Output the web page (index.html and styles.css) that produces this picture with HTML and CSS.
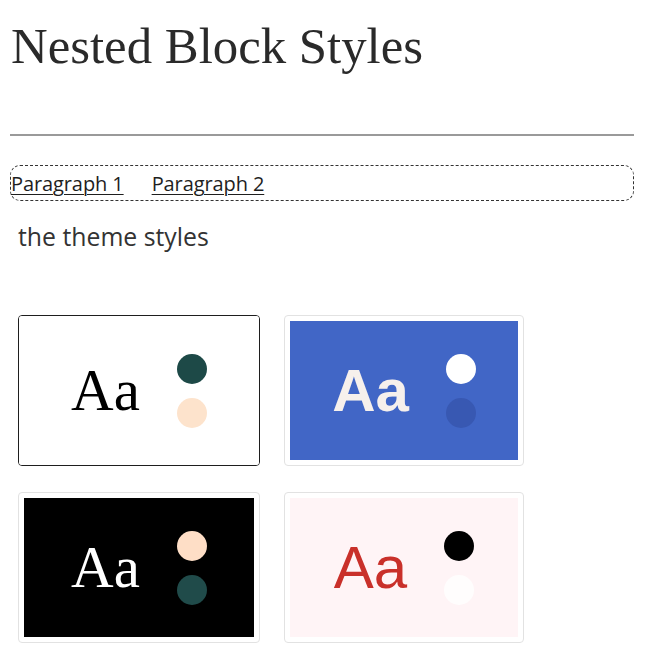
FILE: index.html
```html
<!DOCTYPE html>
<html>
<head>
<meta charset="utf-8">
<link rel="stylesheet" href="styles.css">
</head>
<body>
<div class="page">
  <h1 class="title">Nested Block Styles</h1>
  <hr class="sep">
  <div class="links">
    <a class="link" href="#">Paragraph 1</a>
    <a class="link" href="#">Paragraph 2</a>
  </div>
  <section class="theme">
    <p class="theme-label">the theme styles</p>
    <div class="grid">
      <div class="card card-selected">
        <div class="preview pv-default">
          <span class="aa aa-serif">Aa</span>
          <span class="dots"><span class="dot" style="background:#1d4947"></span><span class="dot" style="background:#fde3cc"></span></span>
        </div>
      </div>
      <div class="card">
        <div class="preview pv-blue">
          <span class="aa aa-bold">Aa</span>
          <span class="dots"><span class="dot" style="background:#ffffff"></span><span class="dot" style="background:#3858b2"></span></span>
        </div>
      </div>
      <div class="card">
        <div class="preview pv-black">
          <span class="aa aa-serif">Aa</span>
          <span class="dots"><span class="dot" style="background:#fedec6"></span><span class="dot" style="background:#204b4a"></span></span>
        </div>
      </div>
      <div class="card">
        <div class="preview pv-pink">
          <span class="aa aa-sans">Aa</span>
          <span class="dots"><span class="dot" style="background:#000000"></span><span class="dot" style="background:#fffdfd"></span></span>
        </div>
      </div>
    </div>
  </section>
</div>
</body>
</html>
```

FILE: styles.css
```css
html, body {
  margin: 0;
  padding: 0;
  background: #ffffff;
}
.page {
  width: 624px;
  margin-left: 10px;
  padding-top: 16px;
}
.title {
  margin: 0;
  font-family: "Liberation Serif", serif;
  font-weight: 400;
  font-size: 50.8px;
  line-height: 60px;
  color: #2a2a2a;
  padding-left: 1px;
}
.sep {
  margin: 58px 0 0 0;
  border: 0;
  height: 2px;
  background: #9a9a9a;
}
.links {
  margin-top: 29px;
  height: 34px;
  border: 1px dashed #333;
  border-radius: 10px;
  display: flex;
  align-items: center;
  gap: 28px;
  font-family: "Open Sans", sans-serif;
  font-size: 20px;
}
.link {
  color: #1e1e1e;
  text-decoration: underline;
  text-underline-offset: 3px;
  text-decoration-thickness: 1px;
  letter-spacing: -0.1px;
}
.theme {
  padding-left: 8px;
}
.theme-label {
  margin: 20px 0 0 0;
  font-family: "Open Sans", sans-serif;
  font-size: 24.8px;
  line-height: 30px;
  color: #333;
}
.grid {
  margin-top: 64px;
  display: grid;
  grid-template-columns: 242px 240px;
  column-gap: 24px;
  row-gap: 26px;
}
.card {
  height: 151px;
  box-sizing: border-box;
  border: 1px solid #e2e2e2;
  border-radius: 4px;
  padding: 5px;
  display: flex;
}
.card-selected {
  border-color: #1e1e1e;
  padding: 0;
}
.preview {
  flex: 1;
  display: flex;
  align-items: center;
  justify-content: center;
  gap: 37px;
}
.pv-default { background: #ffffff; border-radius: 3px; }
.pv-blue { background: #4166c6; color: #f6f0ec; }
.pv-black { background: #000000; color: #ffffff; }
.pv-pink { background: #fff4f6; color: #c9302a; }
.aa {
  line-height: 1;
}
.aa-serif {
  font-family: "Liberation Serif", serif;
  font-size: 59px;
}
.aa-bold {
  font-family: "Liberation Sans", sans-serif;
  font-weight: 700;
  font-size: 60px;
}
.aa-sans {
  font-family: "Liberation Sans", sans-serif;
  font-size: 60px;
}
.dots {
  display: flex;
  flex-direction: column;
  gap: 14px;
}
.dot {
  width: 30px;
  height: 30px;
  border-radius: 50%;
  display: block;
}
```
